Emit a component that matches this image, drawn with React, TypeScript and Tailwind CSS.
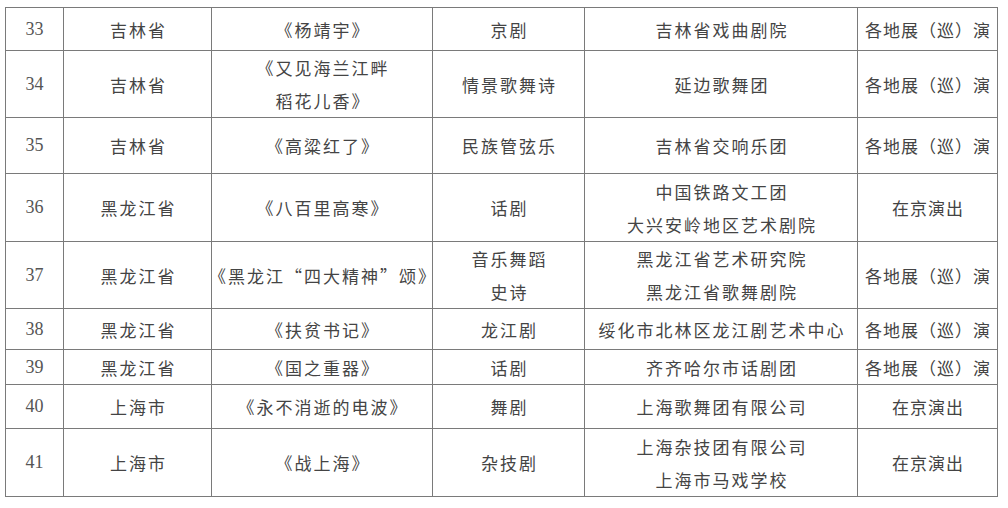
import React from 'react';

interface Row {
  no: string;
  province: string;
  title: string[];
  genre: string[];
  unit: string[];
  mode: string;
}

const rows: Row[] = [
  { no: '33', province: '吉林省', title: ['《杨靖宇》'], genre: ['京剧'], unit: ['吉林省戏曲剧院'], mode: '各地展（巡）演' },
  { no: '34', province: '吉林省', title: ['《又见海兰江畔', '稻花儿香》'], genre: ['情景歌舞诗'], unit: ['延边歌舞团'], mode: '各地展（巡）演' },
  { no: '35', province: '吉林省', title: ['《高粱红了》'], genre: ['民族管弦乐'], unit: ['吉林省交响乐团'], mode: '各地展（巡）演' },
  { no: '36', province: '黑龙江省', title: ['《八百里高寒》'], genre: ['话剧'], unit: ['中国铁路文工团', '大兴安岭地区艺术剧院'], mode: '在京演出' },
  { no: '37', province: '黑龙江省', title: ['《黑龙江“四大精神”颂》'], genre: ['音乐舞蹈', '史诗'], unit: ['黑龙江省艺术研究院', '黑龙江省歌舞剧院'], mode: '各地展（巡）演' },
  { no: '38', province: '黑龙江省', title: ['《扶贫书记》'], genre: ['龙江剧'], unit: ['绥化市北林区龙江剧艺术中心'], mode: '各地展（巡）演' },
  { no: '39', province: '黑龙江省', title: ['《国之重器》'], genre: ['话剧'], unit: ['齐齐哈尔市话剧团'], mode: '各地展（巡）演' },
  { no: '40', province: '上海市', title: ['《永不消逝的电波》'], genre: ['舞剧'], unit: ['上海歌舞团有限公司'], mode: '在京演出' },
  { no: '41', province: '上海市', title: ['《战上海》'], genre: ['杂技剧'], unit: ['上海杂技团有限公司', '上海市马戏学校'], mode: '在京演出' },
];

const cell = 'flex flex-col items-center justify-center border-r border-b border-[#7a7a7a] text-center';

function Lines({ lines, tight }: { lines: string[]; tight?: boolean }) {
  return (
    <>
      {lines.map((line, i) => (
        <div
          key={i}
          className={`whitespace-nowrap leading-[33px] ${tight ? 'tracking-[1px] pl-[1px]' : 'tracking-[2px] pl-[2px]'}`}
        >
          {line}
        </div>
      ))}
    </>
  );
}

export default function App() {
  return (
    <div className="w-[1008px] h-[508px] bg-white overflow-hidden pt-[7px] pl-[5px]">
      <div
        className="grid w-[993px] grid-cols-[58px_148px_221px_152px_273px_140px] grid-rows-[43px_67px_56px_68px_67px_41px_35px_44px_68px] border-l border-t border-[#7a7a7a] text-[17px] text-[#444] font-['Noto_Sans_CJK_SC',sans-serif]"
      >
        {rows.map((r) => (
          <React.Fragment key={r.no}>
            <div className={`${cell} font-['Liberation_Serif',serif] text-[18px] text-[#555]`}>{r.no}</div>
            <div className={cell}>
              <Lines lines={[r.province]} />
            </div>
            <div className={cell}>
              <Lines lines={r.title} />
            </div>
            <div className={cell}>
              <Lines lines={r.genre} />
            </div>
            <div className={cell}>
              <Lines lines={r.unit} />
            </div>
            <div className={cell}>
              <Lines lines={[r.mode]} tight />
            </div>
          </React.Fragment>
        ))}
      </div>
    </div>
  );
}
